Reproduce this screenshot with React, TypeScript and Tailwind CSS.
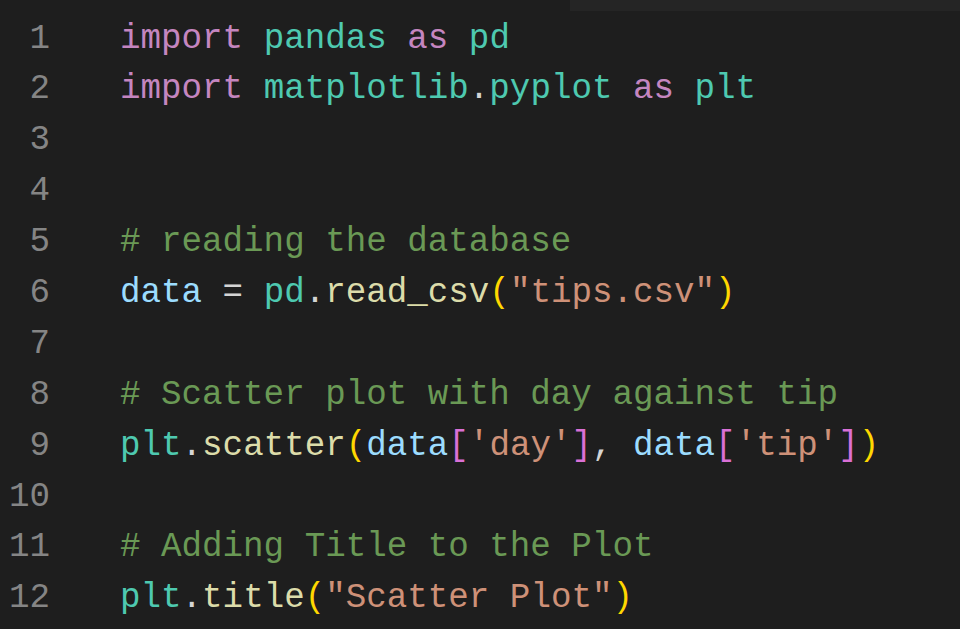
import React from "react";

type Tok = [string, string];

const K = "text-[#c586c0]";
const M = "text-[#4ec9b0]";
const C = "text-[#6a9955]";
const V = "text-[#9cdcfe]";
const F = "text-[#dcdcaa]";
const S = "text-[#ce9178]";
const D = "text-[#d4d4d4]";
const Y = "text-[#ffd700]";
const P = "text-[#da70d6]";

const lines: Tok[][] = [
  [[K, "import"], [D, " "], [M, "pandas"], [D, " "], [K, "as"], [D, " "], [M, "pd"]],
  [[K, "import"], [D, " "], [M, "matplotlib"], [D, "."], [M, "pyplot"], [D, " "], [K, "as"], [D, " "], [M, "plt"]],
  [],
  [],
  [[C, "# reading the database"]],
  [[V, "data"], [D, " = "], [M, "pd"], [D, "."], [F, "read_csv"], [Y, "("], [S, "\"tips.csv\""], [Y, ")"]],
  [],
  [[C, "# Scatter plot with day against tip"]],
  [[M, "plt"], [D, "."], [F, "scatter"], [Y, "("], [V, "data"], [P, "["], [S, "'day'"], [P, "]"], [D, ", "], [V, "data"], [P, "["], [S, "'tip'"], [P, "]"], [Y, ")"]],
  [],
  [[C, "# Adding Title to the Plot"]],
  [[M, "plt"], [D, "."], [F, "title"], [Y, "("], [S, "\"Scatter Plot\""], [Y, ")"]],
];

export default function App() {
  return (
    <div className="w-[960px] h-[629px] overflow-hidden bg-[#1e1e1e] font-['Liberation_Mono',monospace] text-[34.2px]">
      <div className="flex justify-end h-[11px]">
        <div className="w-[390px] bg-[#252525]" />
      </div>
      <div className="flex pt-[2.5px] leading-[50.9px]">
        <div className="w-[50px] text-right text-[#858585]">
          {lines.map((_, i) => (
            <div key={i} className="whitespace-pre h-[50.9px]">{i + 1}</div>
          ))}
        </div>
        <div className="ml-[70px]">
          {lines.map((l, i) => (
            <div key={i} className="whitespace-pre h-[50.9px]">
              {l.map(([c, t], j) => (
                <span key={j} className={c}>{t}</span>
              ))}
            </div>
          ))}
        </div>
      </div>
    </div>
  );
}
